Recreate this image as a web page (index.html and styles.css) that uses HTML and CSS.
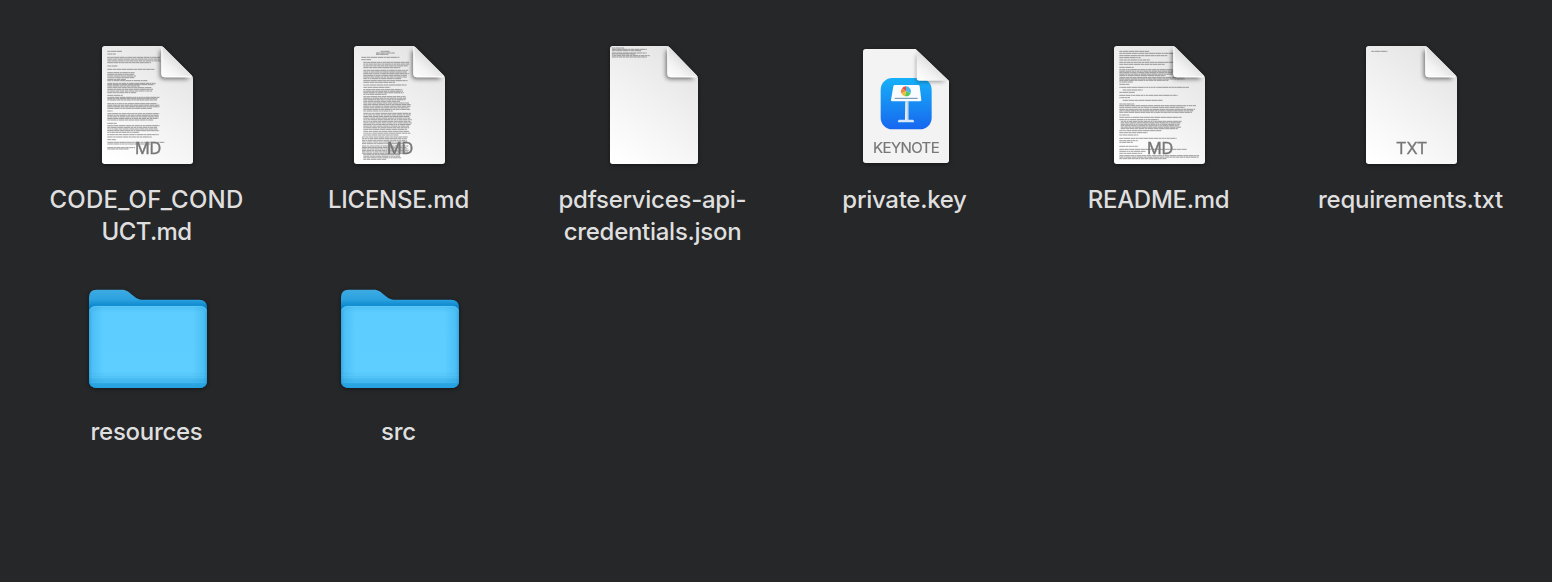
FILE: index.html
```html
<!DOCTYPE html>
<html lang="en">
<head>
<meta charset="utf-8">
<title>Files</title>
<link rel="stylesheet" href="styles.css">
</head>
<body>
<svg class="defs" width="0" height="0" aria-hidden="true">
  <defs>
    <linearGradient id="paper" x1="0.15" y1="1" x2="0.7" y2="0">
      <stop offset="0" stop-color="#fff"/><stop offset="0.55" stop-color="#f1f1f1"/><stop offset="1" stop-color="#e4e4e4"/>
    </linearGradient>
    <linearGradient id="curl" x1="0.05" y1="1" x2="0.55" y2="0.4">
      <stop offset="0" stop-color="#fff"/><stop offset="0.5" stop-color="#f3f3f3"/><stop offset="1" stop-color="#dcdcdc"/>
    </linearGradient>
    <linearGradient id="keyblue" x1="0" y1="0" x2="0" y2="1">
      <stop offset="0" stop-color="#17b0f8"/><stop offset="1" stop-color="#1767ef"/>
    </linearGradient>
    <linearGradient id="steel" x1="0" y1="0" x2="1" y2="0">
      <stop offset="0" stop-color="#fff"/><stop offset="1" stop-color="#a9c3dd"/>
    </linearGradient>
    <linearGradient id="back" x1="0" y1="0" x2="0" y2="1">
      <stop offset="0" stop-color="#3eabe4"/><stop offset="0.1" stop-color="#2ba1df"/><stop offset="0.18" stop-color="#0584cb"/><stop offset="1" stop-color="#0584cb"/>
    </linearGradient>
    <linearGradient id="front" x1="0" y1="0" x2="0" y2="1">
      <stop offset="0" stop-color="#4fc0f4"/><stop offset="0.08" stop-color="#5ccdfe"/><stop offset="0.8" stop-color="#5dceff"/>
      <stop offset="0.86" stop-color="#50c3f7"/><stop offset="0.93" stop-color="#3fb5ed"/><stop offset="0.94" stop-color="#2ba8e4"/><stop offset="1" stop-color="#26a2df"/>
    </linearGradient>
    <linearGradient id="sides" x1="0" y1="0" x2="1" y2="0">
      <stop offset="0" stop-color="#168fd2" stop-opacity=".6"/><stop offset="0.03" stop-color="#229bdc" stop-opacity=".28"/><stop offset="0.12" stop-color="#229bdc" stop-opacity="0"/>
      <stop offset="0.88" stop-color="#229bdc" stop-opacity="0"/><stop offset="0.97" stop-color="#229bdc" stop-opacity=".28"/><stop offset="1" stop-color="#168fd2" stop-opacity=".6"/>
    </linearGradient>
    <filter id="soft" filterUnits="userSpaceOnUse" x="100" y="-40" width="220" height="200" color-interpolation-filters="sRGB"><feGaussianBlur stdDeviation="7"/></filter>
    <path id="sheet" d="M8 0H176Q181 0 185 4L269 88Q273 92 273 98V346Q273 354 265 354H8Q0 354 0 346V8Q0 0 8 0Z"/>
    <clipPath id="sheetclip"><use href="#sheet"/></clipPath>
    <g id="fold">
      <path d="M173 14V88Q173 100 188 100H262L190 14Z" fill="#000" opacity=".5" filter="url(#soft)"/>
      <path d="M178 0Q183 1 187 6L269 88Q272 91 272 94H188Q178 94 178 84Z" fill="url(#curl)"/>
      <path d="M179.500 4V84Q179.500 92.500 188 92.500H268" fill="none" stroke="#fff" stroke-width="3"/>
    </g>
    <g id="folder">
      <path d="M22 1H98C114 1 119 8 129 16C140 25 148 31 164 31H330Q354 31 354 54V274Q354 296 330 296H24Q0 296 0 273V24Q0 1 22 1Z" fill="url(#back)"/>
      <path d="M20 50H334Q354 50 354 70V273Q354 296 330 296H24Q0 296 0 273V70Q0 50 20 50Z" fill="url(#front)"/>
      <path d="M20 50H334Q354 50 354 70V273Q354 296 330 296H24Q0 296 0 273V70Q0 50 20 50Z" fill="url(#sides)"/>
      <path d="M3 66Q5 52 20 51H334Q349 52 351 66" fill="none" stroke="#70d2fb" stroke-width="2" opacity=".7"/>
      <path d="M3 258H351M3 264H351M4 280H350" stroke="#7bd5fa" stroke-width="1.500" opacity=".5"/>
    </g>
  </defs>
</svg>

<main class="files">
  <figure class="file">
    <svg class="icon" viewBox="0 0 354 354"><g transform="translate(39 0)">
      <use href="#sheet" fill="url(#paper)"/><g class="preview" data-doc="conduct"></g>
      <g clip-path="url(#sheetclip)"><use href="#fold"/></g>
      <text class="kind" x="99" y="324" textLength="79">MD</text></g></svg>
    <figcaption class="name wide">CODE_OF_COND<br><span class="tight">UCT.md</span></figcaption>
  </figure>
  <figure class="file">
    <svg class="icon" viewBox="0 0 354 354"><g transform="translate(39 0)">
      <use href="#sheet" fill="url(#paper)"/><g class="preview" data-doc="license"></g>
      <g clip-path="url(#sheetclip)"><use href="#fold"/></g>
      <text class="kind" x="99" y="324" textLength="79">MD</text></g></svg>
    <figcaption class="name">LICENSE.md</figcaption>
  </figure>
  <figure class="file">
    <svg class="icon" viewBox="0 0 354 354"><g transform="translate(45 0) scale(.967 1)">
      <use href="#sheet" fill="url(#paper)"/><g class="preview" data-doc="json"></g>
      <g clip-path="url(#sheetclip)"><use href="#fold"/></g></g></svg>
    <figcaption class="name">pdfservices-api-<br>credentials.json</figcaption>
  </figure>
  <figure class="file">
    <svg class="icon" viewBox="0 0 354 354"><g transform="translate(48 9)">
      <path d="M8 0H158L258 95V334Q258 342 250 342H8Q0 342 0 334V8Q0 0 8 0Z" fill="#f3f3f3"/>
      <rect x="53" y="87" width="153" height="154" rx="35" fill="url(#keyblue)"/>
      <path d="M127 157H137V215H126Z" fill="url(#steel)"/>
      <path d="M109 212H149Q153 213 153 217V220H105V217Q105 213 109 212Z" fill="#d8e7f6"/>
      <path d="M95 108H166Q169 108 170 112L175 153Q175 157 171 157H87Q83 157 84 153L91 112Q92 108 95 108Z" fill="#f8fbff"/>
      <path d="M95 148H164" stroke="#6689a5" stroke-width="3"/>
      <g transform="translate(129 127)">
        <path d="M0 0V-15A15 15 0 0 1 14 5Z" fill="#46b8ef"/>
        <path d="M0 0L14 5A15 15 0 0 1 -3 14.700Z" fill="#4fc957"/>
        <path d="M0 0L-3 14.700A15 15 0 0 1 -14 6Z" fill="#f1bd35"/>
        <path d="M0 0L-14 6A15 15 0 0 1 -12 -9Z" fill="#f28b37"/>
        <path d="M0 0L-12 -9A15 15 0 0 1 0 -15Z" fill="#e74d4d"/>
      </g>
      <clipPath id="keyclip"><path d="M0 0H158L258 95V342H0Z"/></clipPath>
      <g clip-path="url(#keyclip)">
        <path d="M161 14V98H248Z" fill="#000" opacity=".4" filter="url(#soft)"/>
        <path d="M161 2V87Q161 95 169 95H257Z" fill="url(#curl)"/>
      </g>
      <text class="kind key" x="30" y="311" textLength="200">KEYNOTE</text></g></svg>
    <figcaption class="name">private.key</figcaption>
  </figure>
  <figure class="file">
    <svg class="icon" viewBox="0 0 354 354"><g transform="translate(39 0)">
      <use href="#sheet" fill="url(#paper)"/><g class="preview" data-doc="readme"></g>
      <g clip-path="url(#sheetclip)"><use href="#fold"/></g>
      <text class="kind" x="99" y="324" textLength="79">MD</text></g></svg>
    <figcaption class="name">README.md</figcaption>
  </figure>
  <figure class="file">
    <svg class="icon" viewBox="0 0 354 354"><g transform="translate(39 0)">
      <use href="#sheet" fill="url(#paper)"/><g class="preview" data-doc="txt"></g>
      <g clip-path="url(#sheetclip)"><use href="#fold"/></g>
      <text class="kind" x="90" y="324" textLength="94">TXT</text></g></svg>
    <figcaption class="name">requirements.txt</figcaption>
  </figure>
  <figure class="file">
    <svg class="icon" viewBox="0 0 354 354"><use href="#folder" y="34"/></svg>
    <figcaption class="name">resources</figcaption>
  </figure>
  <figure class="file">
    <svg class="icon" viewBox="0 0 354 354"><use href="#folder" y="34"/></svg>
    <figcaption class="name">src</figcaption>
  </figure>
</main>
<script src="preview.js"></script>
</body>
</html>
```
FILE: styles.css
```css
body {
  margin: 0;
  min-height: 582px;
  background: #262729;
  color: #dfdfdf;
  font-family: Inter, "Liberation Sans", sans-serif;
}

.defs {
  display: block;
  height: 0;
}

.files {
  display: grid;
  grid-template-columns: 252px 254px 252px 254px 252px 240px;
  grid-auto-rows: 232px;
  padding: 46px 0 0 48px;
}

.file {
  display: flex;
  flex-direction: column;
  align-items: center;
  width: 200px;
  margin: 0;
}

.icon {
  width: 118px;
  height: 118px;
  overflow: visible;
  filter: drop-shadow(0 1px 2px rgba(0, 0, 0, .45));
}

.kind {
  fill: #777;
  stroke: #777;
  stroke-width: 1px;
  font-size: 49px;
  font-weight: 400;
}

.key {
  font-size: 45px;
  stroke-width: .5px;
}

.preview path {
  fill: none;
  stroke: #555;
  stroke-width: 2.8;
  opacity: .6;
}

.name {
  margin: 20px 3px 0 0;
  font-size: 24px;
  font-weight: 500;
  line-height: 32px;
  letter-spacing: -0.28px;
  text-align: center;
  white-space: nowrap;
}

.wide {
  letter-spacing: 0.22px;
}

.tight {
  letter-spacing: -0.6px;
}
```
FILE: preview.js
```js
// Miniature page contents: [first line, last line, left, right] for each paragraph.
const docs = {
  conduct: [[16,16,16,62],[24,24,16,42],[34,50,16,176],[60,60,16,47],[70,70,16,162],[80,100,16,102],[104,104,16,143],[112,120,16,165],[125,140,16,155],[148,148,16,63],[154,162,16,174],[173,187,16,174],[195,195,16,32],[203,222,16,173],[232,232,16,45],[239,259,16,174],[266,273,16,172],[281,281,16,42],[289,294,16,190],[305,309,16,100]],
  license: [[16,16,80,108],[21,25,66,123],[34,34,22,143],[41,41,22,52],[49,65,28,166],[73,98,28,165],[104,109,28,162],[117,124,28,162],[131,145,28,150],[152,166,28,158],[171,195,28,170],[202,250,28,174],[256,267,28,172],[273,293,24,163],[300,322,24,165],[326,340,28,145]],
  json: [[6,6,6,45],[10,14,6,118],[21,24,6,116],[29,33,6,124]],
  readme: [[16,16,16,108],[22,29,16,194],[35,35,16,80],[42,42,16,110],[49,55,16,186],[64,64,16,62],[71,89,16,184],[95,103,16,212],[108,108,16,58],[115,115,16,46],[124,124,16,225],[132,132,26,86],[139,139,16,65],[148,148,16,200],[155,155,16,50],[163,163,26,146],[174,174,16,62],[179,184,16,252],[190,199,16,250],[207,207,16,46],[214,221,16,205],[226,248,20,203],[254,260,16,150],[267,267,16,75],[277,277,16,192],[284,289,16,74],[301,301,16,76],[310,310,16,228],[316,322,16,98],[329,338,16,260]],
  txt: [[16,16,16,66]]
};
document.querySelectorAll("[data-doc]").forEach(group => {
  let seed = 7;
  const rnd = () => (seed = (seed * 16807) % 2147483647) / 2147483647;
  for (let i = 0; i < 5; i++) rnd();
  let d = "";
  for (const [top, bottom, left, right] of docs[group.dataset.doc]) {
    const rows = Math.round((bottom - top) / 4.7);
    for (let i = 0; i <= rows; i++) {
      const y = rows ? top + (bottom - top) * i / rows : top;
      const last = rows && i === rows ? 0.55 + rnd() * 0.4 : 0.94 + rnd() * 0.06;
      const end = left + (right - left) * last;
      let x = left;
      while (x < end) {
        const word = Math.min(4 + rnd() * 16, end - x);
        d += `M${x.toFixed(1)} ${y.toFixed(1)}h${word.toFixed(1)}`;
        x += word + 1.3;
      }
    }
  }
  const path = document.createElementNS("http://www.w3.org/2000/svg", "path");
  path.setAttribute("d", d);
  group.append(path);
});
```
